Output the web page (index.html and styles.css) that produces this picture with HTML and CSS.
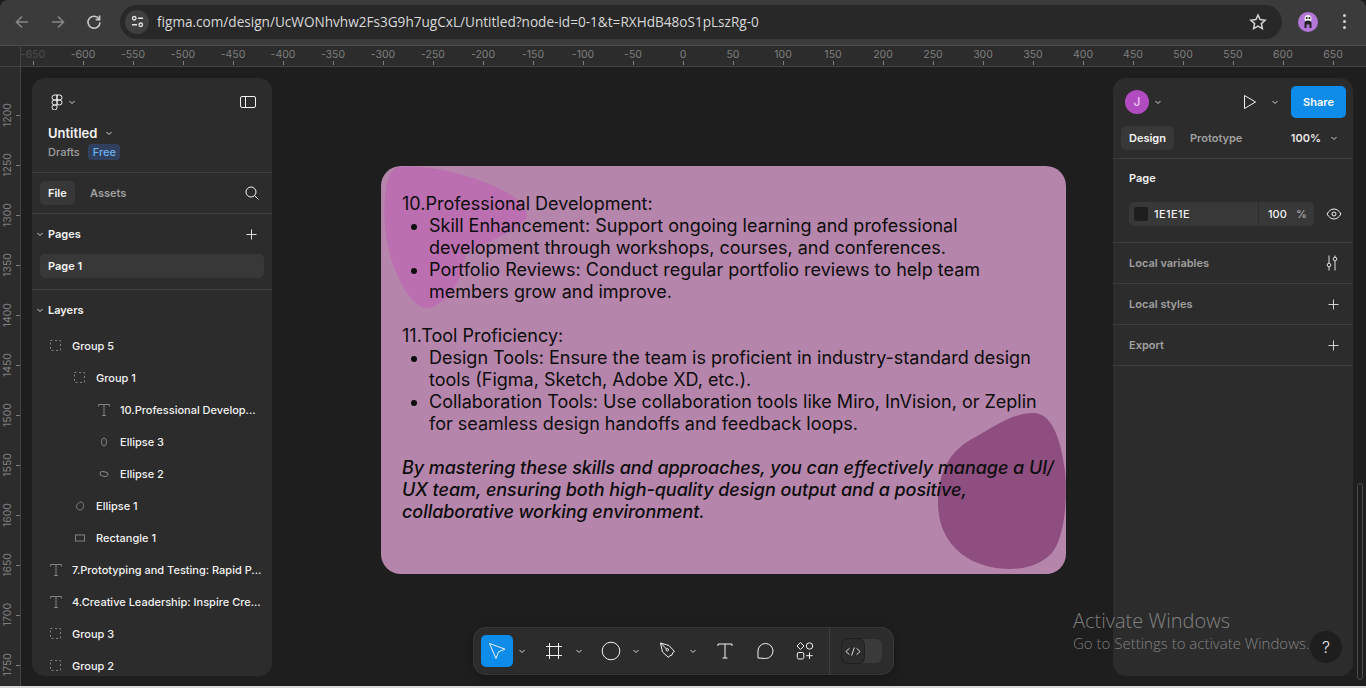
FILE: index.html
```html
<!DOCTYPE html>
<html lang="en">
<head>
    <meta charset="UTF-8" />
    <meta name="viewport" content="width=device-width, initial-scale=1.0" />
    <title>Untitled - Figma</title>
    <link rel="stylesheet" href="styles.css">
</head>
<body>
    <!-- browser toolbar -->
    <header class="chrome">
        <svg class="nav-icon dim" viewBox="0 0 16 16"><path d="M14 8H2.500M8 2.500 2.500 8 8 13.500"/></svg>
        <svg class="nav-icon dim" viewBox="0 0 16 16"><path d="M2 8h11.500M8 2.500 13.500 8 8 13.500"/></svg>
        <svg class="nav-icon" viewBox="0 0 16 16"><path d="M13.200 5.200A6 6 0 1 0 14 8.400"/><path d="M13.600 1.600v4h-4"/></svg>
        <div class="omnibox">
            <span class="site-info">
                <svg viewBox="0 0 14 14"><circle cx="3.500" cy="3.500" r="1.900"/><path d="M7.500 3.500H13M1 10.500h5.500"/><circle cx="10.500" cy="10.500" r="1.900"/></svg>
            </span>
            <span class="url">figma.com/design/UcWONhvhw2Fs3G9h7ugCxL/Untitled?node-id=0-1&amp;t=RXHdB48oS1pLszRg-0</span>
            <svg class="star" viewBox="0 0 18 18"><path d="M9 2l2.100 4.600 5 .6-3.700 3.400 1 5L9 13.100l-4.400 2.500 1-5L1.900 7.200l5-.6z"/></svg>
        </div>
        <span class="profile">
            <svg viewBox="0 0 20 20"><circle cx="10" cy="6.500" r="3.500" fill="#eee"/><circle cx="8.700" cy="6" r="1" fill="#222"/><circle cx="11.500" cy="6" r="1" fill="#222"/><path d="M6.500 16v-4.500a3.500 3 0 0 1 7 0V16h-2v-3.500H8.500V16z" fill="#222"/></svg>
        </span>
        <span class="kebab"><i></i><i></i><i></i></span>
    </header>

    <div class="ruler-top">
        <div class="ruler-corner"></div>
        <div class="ticks-h">
            <span class="faded">-650</span><span>-600</span><span>-550</span><span>-500</span><span>-450</span><span>-400</span><span>-350</span><span>-300</span><span>-250</span><span>-200</span><span>-150</span><span>-100</span><span>-50</span><span>0</span><span>50</span><span>100</span><span>150</span><span>200</span><span>250</span><span>300</span><span>350</span><span>400</span><span>450</span><span>500</span><span>550</span><span>600</span><span>650</span>
        </div>
    </div>

    <div class="workspace">
        <div class="ruler-left">
            <span><b>1200</b></span><span><b>1250</b></span><span><b>1300</b></span><span><b>1350</b></span><span><b>1400</b></span><span><b>1450</b></span><span><b>1500</b></span><span><b>1550</b></span><span><b>1600</b></span><span><b>1650</b></span><span><b>1700</b></span><span><b>1750</b></span>
        </div>

        <main class="canvas">
            <!-- artboard sits on the free canvas -->
            <section class="artboard">
                <svg class="blobs" viewBox="0 0 685 408">
                    <path fill="#bb6fb0" d="M14 2C30-2 60 2 85 10c30 9 61 23 61 40 0 12-46 28-62 38 0 17-12 42-24 48-5 4-10 6-14 6-16 0-32-32-38-57C3 65 2 40 5 24 6 14 9 6 14 2z"/>
                    <path fill="#8e4f80" d="M589 274c21-11 41-27 63-27 20 0 28 28 32 58 3 35-2 70-14 83-10 10-25 15-41 15-39 0-72-23-72-66 0-32 13-52 32-63z"/>
                </svg>
                <div class="copy">
                    <p>10.Professional Development:</p>
                    <ul>
                        <li>Skill Enhancement: Support ongoing learning and professional development through workshops, courses, and conferences.</li>
                        <li>Portfolio Reviews: Conduct regular portfolio reviews to help team members grow and improve.</li>
                    </ul>
                    <p>11.Tool Proficiency:</p>
                    <ul>
                        <li>Design Tools: Ensure the team is proficient in industry-standard design tools (Figma, Sketch, Adobe XD, etc.).</li>
                        <li>Collaboration Tools: Use collaboration tools like Miro, InVision, or Zeplin for seamless design handoffs and feedback loops.</li>
                    </ul>
                    <p class="closing">By mastering these skills and approaches, you can effectively manage a UI/ UX team, ensuring both high-quality design output and a positive, collaborative working environment.</p>
                </div>
            </section>

            <aside class="panel">
                <div class="file-head">
                    <div class="logo-row">
                        <div class="logo-menu">
                            <svg class="figma-logo" viewBox="0 0 12 16"><path d="M6 1H3.500a2.500 2.500 0 0 0 0 5H6zM6 1h2.500a2.500 2.500 0 0 1 0 5H6zM6 6H3.500a2.500 2.500 0 0 0 0 5H6zM6 6h2.500a2.500 2.500 0 0 1 0 5 2.500 2.500 0 0 1-2.500-2.500zM6 11H3.500A2.500 2.500 0 1 0 6 13.500z"/></svg>
                            <svg class="chev" viewBox="0 0 8 8"><path d="M1.500 3 4 5.500 6.500 3"/></svg>
                        </div>
                        <svg class="sidebar-icon" viewBox="0 0 16 12"><rect x=".5" y=".5" width="15" height="11" rx="1.500"/><path d="M5.500 .5v11"/></svg>
                    </div>
                    <div class="file-name">Untitled <svg class="chev" viewBox="0 0 8 8"><path d="M1.500 3 4 5.500 6.500 3"/></svg></div>
                    <div class="file-meta"><span>Drafts</span><span class="badge">Free</span></div>
                </div>

                <div class="tabs">
                    <span class="tab active file-tab">File</span>
                    <span class="tab">Assets</span>
                    <svg class="search-icon" viewBox="0 0 14 14"><circle cx="6" cy="6" r="5"/><path d="M9.600 9.600 13.500 13.500"/></svg>
                </div>

                <div class="pages">
                    <div class="section-title">
                        <svg class="chev" viewBox="0 0 8 8"><path d="M1.500 3 4 5.500 6.500 3"/></svg>
                        <span>Pages</span>
                        <svg class="plus" viewBox="0 0 12 12"><path d="M6 .5v11M.5 6h11"/></svg>
                    </div>
                    <div class="page-row">Page 1</div>
                </div>

                <div class="layers">
                    <div class="section-title">
                        <svg class="chev" viewBox="0 0 8 8"><path d="M1.500 3 4 5.500 6.500 3"/></svg>
                        <span>Layers</span>
                    </div>
                    <ul class="layer-list">
                        <li class="layer"><svg class="layer-icon" viewBox="0 0 12 12"><rect class="dash" x=".5" y=".5" width="10" height="10"/></svg>Group 5</li>
                        <li class="layer depth-1"><svg class="layer-icon" viewBox="0 0 12 12"><rect class="dash" x=".5" y=".5" width="10" height="10"/></svg>Group 1</li>
                        <li class="layer depth-2"><svg class="layer-icon" viewBox="0 0 12 12"><path d="M.5 2.500V.5h11v2M6 .5v11M4 11.500h4"/></svg>10.Professional Develop...</li>
                        <li class="layer depth-2"><svg class="layer-icon" viewBox="0 0 12 12"><ellipse cx="6" cy="6" rx="2.500" ry="4"/></svg>Ellipse 3</li>
                        <li class="layer depth-2"><svg class="layer-icon" viewBox="0 0 12 12"><ellipse cx="6" cy="6" rx="4" ry="2.300" transform="rotate(10 6 6)"/></svg>Ellipse 2</li>
                        <li class="layer depth-1"><svg class="layer-icon" viewBox="0 0 12 12"><path d="M7 2c2 0 2.500 2 2.500 3.800 0 2.500-1.500 4.200-3.500 4.200S2.500 8.500 2.500 6.500C2.500 4.500 5 2 7 2z"/></svg>Ellipse 1</li>
                        <li class="layer depth-1"><svg class="layer-icon" viewBox="0 0 12 12"><rect x="1.500" y="3" width="9" height="6"/></svg>Rectangle 1</li>
                        <li class="layer"><svg class="layer-icon" viewBox="0 0 12 12"><path d="M.5 2.500V.5h11v2M6 .5v11M4 11.500h4"/></svg>7.Prototyping and Testing: Rapid P...</li>
                        <li class="layer"><svg class="layer-icon" viewBox="0 0 12 12"><path d="M.5 2.500V.5h11v2M6 .5v11M4 11.500h4"/></svg>4.Creative Leadership: Inspire Cre...</li>
                        <li class="layer"><svg class="layer-icon" viewBox="0 0 12 12"><rect class="dash" x=".5" y=".5" width="10" height="10"/></svg>Group 3</li>
                        <li class="layer"><svg class="layer-icon" viewBox="0 0 12 12"><rect class="dash" x=".5" y=".5" width="10" height="10"/></svg>Group 2</li>
                    </ul>
                </div>
            </aside>

            <aside class="panel">
                <div class="share-row">
                    <span class="user">J</span>
                    <svg class="chev" viewBox="0 0 8 8"><path d="M1.500 3 4 5.500 6.500 3"/></svg>
                    <svg class="play" viewBox="0 0 14 16"><path d="M1.500 1.500v13l11-6.500z"/></svg>
                    <svg class="chev" viewBox="0 0 8 8"><path d="M1.500 3 4 5.500 6.500 3"/></svg>
                    <button class="share">Share</button>
                </div>
                <div class="design-tabs">
                    <span class="tab active">Design</span>
                    <span class="tab">Prototype</span>
                    <span class="zoom-value">100%</span>
                    <svg class="chev" viewBox="0 0 8 8"><path d="M1.500 3 4 5.500 6.500 3"/></svg>
                </div>
                <div class="page-props">
                    <div class="props-title">Page</div>
                    <div class="fill-row">
                        <div class="fill-field">
                            <div class="fill-color"><i class="swatch"></i>1E1E1E</div>
                            <div class="fill-opacity"><span>100</span><span class="pct">%</span></div>
                        </div>
                        <svg class="eye" viewBox="0 0 16 12"><path d="M1 6c2-3.300 4.300-5 7-5s5 1.700 7 5c-2 3.300-4.300 5-7 5S3 9.300 1 6z"/><circle cx="8" cy="6" r="2"/></svg>
                    </div>
                </div>
                <div class="prop-row">
                    <span>Local variables</span>
                    <svg class="sliders" viewBox="0 0 14 16"><path d="M4 .5v8M4 12v3.500M10 .5V2M10 6v9.500"/><circle cx="4" cy="10" r="1.800"/><circle cx="10" cy="4" r="1.800"/></svg>
                </div>
                <div class="prop-row">
                    <span>Local styles</span>
                    <svg class="plus" viewBox="0 0 12 12"><path d="M6 .5v11M.5 6h11"/></svg>
                </div>
                <div class="prop-row">
                    <span>Export</span>
                    <svg class="plus" viewBox="0 0 12 12"><path d="M6 .5v11M.5 6h11"/></svg>
                </div>
            </aside>

            <!-- floating tools -->
            <nav class="toolbar">
                <span class="tool selected">
                    <svg viewBox="0 0 20 20"><path d="M2.500 2.500 18 8.200l-6.500 2.600L9 17.500z" stroke-linejoin="round"/></svg>
                </span>
                <svg class="chev tool-chev" viewBox="0 0 8 8"><path d="M1.500 3 4 5.500 6.500 3"/></svg>
                <span class="tool">
                    <svg viewBox="0 0 20 20"><path d="M5.500 2v16M14.500 2v16M2 5.500h16M2 14.500h16"/></svg>
                </span>
                <svg class="chev tool-chev" viewBox="0 0 8 8"><path d="M1.500 3 4 5.500 6.500 3"/></svg>
                <span class="tool">
                    <svg viewBox="0 0 20 20"><circle cx="10" cy="10" r="8.800"/></svg>
                </span>
                <svg class="chev tool-chev" viewBox="0 0 8 8"><path d="M1.500 3 4 5.500 6.500 3"/></svg>
                <span class="tool">
                    <svg viewBox="0 0 20 20"><path d="M2.500 2 11 4.500l5.500 6-1.800 1.200-.7 2.300-2.300.7-1.200 1.800-6-5.500zM2.500 2l6 6"/><circle cx="9.300" cy="8.800" r="1.200"/></svg>
                </span>
                <svg class="chev tool-chev" viewBox="0 0 8 8"><path d="M1.500 3 4 5.500 6.500 3"/></svg>
                <span class="tool">
                    <svg viewBox="0 0 20 20"><path d="M3 5V3h14v2M10 3v14M7.500 17h5"/></svg>
                </span>
                <span class="tool spaced">
                    <svg viewBox="0 0 20 20"><path d="M3 17V10a7.500 7.500 0 1 1 7.500 7.500z"/></svg>
                </span>
                <span class="tool spaced">
                    <svg viewBox="0 0 20 20"><path d="M5.500 1.500 9 5 5.500 8.500 2 5z"/><circle cx="14.500" cy="5" r="3.200"/><rect x="2.300" y="11.500" width="6.500" height="6.500" rx="1.500"/><path d="M14.500 11.500v6.500M11.200 14.700h6.500"/></svg>
                </span>
                <div class="dev-toggle">
                    <div class="dev-track">
                        <span class="dev-knob">
                            <svg viewBox="0 0 18 12"><path d="M5 2.500 1 6l4 3.500M13 2.500 17 6l-4 3.500M10.500 1.500l-3 9"/></svg>
                        </span>
                    </div>
                </div>
            </nav>

            <div class="scroll-thumb"></div>
            <div class="activate">
                <div class="activate-title">Activate Windows</div>
                <div class="activate-sub">Go to Settings to activate Windows.</div>
            </div>
            <span class="help">?</span>
        </main>
    </div>
    <div class="taskbar-edge"></div>
</body>
</html>
```

FILE: styles.css
```css
* {
    box-sizing: border-box;
}

body {
    margin: 0;
    width: 1366px;
    height: 688px;
    overflow: hidden;
    display: flex;
    flex-direction: column;
    background-color: #1e1e1e;
    font-family: Inter, "Noto Sans", sans-serif;
    color: #f2f2f2;
}

svg {
    fill: none;
    stroke: currentColor;
    stroke-width: 1;
    flex-shrink: 0;
    display: block;
}

ul {
    margin: 0;
    padding: 0;
}

/* browser toolbar */
.chrome {
    height: 46px;
    flex-shrink: 0;
    display: flex;
    align-items: center;
    padding: 0 12px 2px 14px;
    border-radius: 8px 8px 0 0;
    background-color: #3b3b3b;
    border-bottom: 1px solid #4b4b4b;
}

.nav-icon {
    width: 16px;
    height: 16px;
    margin-right: 20px;
    color: #c7c7c7;
    stroke-width: 1.6;
}

.nav-icon.dim {
    color: #858585;
}

.omnibox {
    width: 1162px;
    height: 34px;
    margin-left: -2px;
    display: flex;
    align-items: center;
    padding: 0 15px 0 5px;
    border-radius: 17px;
    background-color: #282828;
}

.site-info {
    width: 24px;
    height: 24px;
    border-radius: 50%;
    background-color: #3f3f3f;
    display: flex;
    align-items: center;
    justify-content: center;
    color: #e3e3e3;
}

.site-info svg {
    width: 13px;
    height: 13px;
    stroke-width: 1.4;
}

.url {
    flex: 1;
    margin-left: 8px;
    font-family: "Open Sans", sans-serif;
    font-size: 13.6px;
    color: #d8d8d8;
}

.star {
    width: 18px;
    height: 18px;
    color: #d5d5d5;
    stroke-width: 1.5;
}

.profile {
    width: 20px;
    height: 20px;
    margin-left: 16px;
    border-radius: 50%;
    background-color: #b576da;
}

.profile svg {
    stroke: none;
}

.kebab {
    margin-left: 25px;
    display: flex;
    flex-direction: column;
    gap: 3px;
}

.kebab i {
    width: 3px;
    height: 3px;
    border-radius: 50%;
    background-color: #cfcfcf;
}

/* rulers */
.ruler-top {
    height: 21px;
    flex-shrink: 0;
    display: flex;
    background-color: #2c2c2c;
    border-bottom: 1px solid #444;
}

.ruler-corner {
    width: 21px;
    flex-shrink: 0;
    border-right: 1px solid #444;
}

.ticks-h {
    flex: 1;
    display: flex;
    overflow: hidden;
    margin-left: -13px;
}

.ticks-h span {
    width: 50px;
    flex-shrink: 0;
    display: flex;
    flex-direction: column;
    align-items: center;
    padding-top: 2px;
    font-size: 10.5px;
    line-height: 13px;
    color: #7f7f7f;
}

.ticks-h span::after {
    content: "";
    width: 1px;
    height: 4px;
    background-color: #7f7f7f;
}

.ticks-h .faded {
    color: #4e4e4e;
}

.workspace {
    flex: 1;
    min-height: 0;
    display: flex;
}

.ruler-left {
    width: 21px;
    flex-shrink: 0;
    display: flex;
    flex-direction: column;
    overflow: hidden;
    padding-top: 23px;
    background-color: #2c2c2c;
    border-right: 1px solid #444;
}

.ruler-left span {
    height: 50px;
    flex-shrink: 0;
    display: flex;
    align-items: center;
    justify-content: flex-end;
}

.ruler-left span::after {
    content: "";
    width: 4px;
    height: 1px;
    background-color: #7f7f7f;
}

.ruler-left b {
    writing-mode: vertical-rl;
    transform: rotate(180deg);
    margin-right: 2px;
    font-weight: 400;
    font-size: 10.5px;
    line-height: 13px;
    color: #7f7f7f;
}

/* canvas */
.canvas {
    flex: 1;
    position: relative;
    display: flex;
    justify-content: space-between;
    padding: 11px 13px 10px 11px;
    background-color: #1e1e1e;
}

.artboard {
    position: absolute;
    left: 360px;
    top: 99px;
    width: 685px;
    height: 408px;
    border-radius: 20px;
    overflow: hidden;
    background-color: #b585ab;
    color: #0d0d0d;
}

.blobs {
    position: absolute;
    left: 0;
    top: 0;
    width: 685px;
    height: 408px;
    stroke: none;
}

.copy {
    position: relative;
    width: 656px;
    margin-left: 21px;
    padding-top: 27px;
    font-size: 18px;
    line-height: 22px;
}

.copy p {
    margin: 0;
}

.copy ul {
    padding-left: 27px;
    margin-bottom: 22px;
}

.copy .closing {
    font-style: italic;
    font-weight: 500;
    letter-spacing: -0.05px;
}

/* side panels */
.panel {
    width: 240px;
    position: relative;
    overflow: hidden;
    display: flex;
    flex-direction: column;
    border-radius: 13px;
    background-color: #2c2c2c;
    font-size: 11px;
    font-weight: 500;
}

.chev {
    width: 8px;
    height: 8px;
    color: #d5d5d5;
}

.file-head {
    height: 95px;
    flex-shrink: 0;
    padding: 15px 16px 0;
    border-bottom: 1px solid #3f3f3f;
}

.logo-row {
    display: flex;
    align-items: center;
    justify-content: space-between;
    height: 18px;
}

.logo-menu {
    display: flex;
    align-items: center;
    gap: 5px;
    margin-left: 3px;
}

.figma-logo {
    width: 12px;
    height: 16px;
}

.sidebar-icon {
    width: 16px;
    height: 12px;
}

.file-name {
    display: flex;
    align-items: center;
    gap: 8px;
    margin-top: 14px;
    font-size: 13px;
    font-weight: 600;
    line-height: 16px;
}

.file-meta {
    display: flex;
    align-items: center;
    gap: 8px;
    margin-top: 3px;
    color: #a0a0a0;
}

.badge {
    height: 16px;
    padding: 0 4px 0 5px;
    line-height: 16px;
    border-radius: 4px;
    background-color: #2f3f5c;
    color: #6cb2ee;
}

.tabs {
    height: 41px;
    flex-shrink: 0;
    display: flex;
    align-items: center;
    gap: 7px;
    padding: 0 13px 0 8px;
    border-bottom: 1px solid #3f3f3f;
}

.tab {
    height: 24px;
    padding: 0 8px;
    line-height: 24px;
    border-radius: 5px;
    color: #a0a0a0;
    font-weight: 600;
}

.tab.active {
    background-color: #383838;
    color: #f5f5f5;
}

.file-tab {
    min-width: 35px;
}

.search-icon {
    width: 14px;
    height: 14px;
    margin-left: auto;
}

.pages {
    height: 76px;
    flex-shrink: 0;
    border-bottom: 1px solid #3f3f3f;
}

.section-title {
    height: 40px;
    display: flex;
    align-items: center;
    gap: 4px;
    padding: 0 15px 0 4px;
    font-weight: 600;
}

.section-title .plus {
    margin-left: auto;
}

.plus {
    width: 11px;
    height: 11px;
}

.page-row {
    height: 24px;
    margin: 0 8px;
    padding-left: 8px;
    line-height: 24px;
    border-radius: 5px;
    background-color: #383838;
    font-weight: 600;
}

.layers {
    flex: 1;
    min-height: 0;
}

.layer-list {
    list-style: none;
}

.layer {
    height: 32px;
    display: flex;
    align-items: center;
    padding-left: 18px;
    white-space: nowrap;
}

.layer.depth-1 {
    padding-left: 42px;
}

.layer.depth-2 {
    padding-left: 66px;
}

.layer-icon {
    width: 12px;
    height: 12px;
    margin-right: 10px;
    color: #828282;
}

.dash {
    stroke-dasharray: 2 2.5;
}

/* right panel */
.share-row {
    height: 48px;
    flex-shrink: 0;
    display: flex;
    align-items: center;
    padding: 0 7px 0 12px;
}

.user {
    width: 24px;
    height: 24px;
    margin-right: 5px;
    border-radius: 50%;
    background-color: #b04cc0;
    color: #eec6f2;
    font-size: 12px;
    line-height: 24px;
    text-align: center;
}

.play {
    width: 14px;
    height: 16px;
    margin-left: auto;
    margin-right: 14px;
}

.share {
    width: 55px;
    height: 32px;
    margin-left: 12px;
    border: none;
    border-radius: 5px;
    background-color: #0d8ce9;
    color: #fff;
    font-family: inherit;
    font-size: 11px;
    font-weight: 600;
}

.design-tabs {
    height: 33px;
    flex-shrink: 0;
    display: flex;
    align-items: flex-start;
    gap: 8px;
    padding: 0 15px 0 8px;
    border-bottom: 1px solid #3f3f3f;
}

.zoom-value {
    margin-left: auto;
    margin-right: 1px;
    line-height: 24px;
    font-weight: 600;
    color: #e6e6e6;
}

.design-tabs .chev {
    margin-top: 8px;
}

.page-props {
    height: 84px;
    flex-shrink: 0;
    padding: 0 0 0 16px;
    border-bottom: 1px solid #3f3f3f;
}

.props-title {
    height: 43px;
    line-height: 38px;
    font-weight: 600;
}

.fill-row {
    display: flex;
    align-items: center;
}

.fill-field {
    width: 185px;
    height: 24px;
    flex-shrink: 0;
    display: flex;
    border-radius: 5px;
    background-color: #383838;
}

.fill-color {
    width: 130px;
    display: flex;
    align-items: center;
    gap: 6px;
    padding-left: 5px;
    border-right: 1px solid #2c2c2c;
    letter-spacing: 0.4px;
}

.swatch {
    width: 14px;
    height: 14px;
    border-radius: 2px;
    background-color: #1e1e1e;
}

.fill-opacity {
    flex: 1;
    display: flex;
    justify-content: space-between;
    padding: 0 7px 0 9px;
    line-height: 24px;
}

.pct {
    color: #aaa;
}

.eye {
    width: 16px;
    height: 12px;
    margin-left: 12px;
}

.prop-row {
    height: 41px;
    flex-shrink: 0;
    display: flex;
    align-items: center;
    justify-content: space-between;
    padding: 0 14px 0 16px;
    border-bottom: 1px solid #3f3f3f;
    color: #a0a0a0;
    font-weight: 600;
}

.prop-row svg {
    color: #e0e0e0;
}

.sliders {
    width: 14px;
    height: 16px;
}

/* bottom toolbar */
.toolbar {
    position: absolute;
    left: 452px;
    top: 560px;
    width: 421px;
    height: 48px;
    display: flex;
    align-items: center;
    padding-left: 8px;
    border-radius: 13px;
    background-color: #2c2c2c;
    box-shadow: inset 0 0 0 1px #363636, 0 2px 8px rgba(0, 0, 0, 0.3);
}

.tool {
    width: 32px;
    height: 32px;
    display: flex;
    align-items: center;
    justify-content: center;
    border-radius: 5px;
}

.tool svg {
    width: 20px;
    height: 20px;
}

.tool.selected {
    background-color: #0d8ce9;
}

.tool.spaced {
    margin-left: 8px;
}

.tool-chev {
    margin: 0 12px 0 5px;
}

.dev-toggle {
    flex: 1;
    height: 48px;
    margin-left: 8px;
    display: flex;
    align-items: center;
    justify-content: center;
    border-left: 1px solid #3f3f3f;
}

.dev-track {
    width: 40px;
    height: 24px;
    border-radius: 6px;
    background-color: #3a3a3a;
}

.dev-knob {
    width: 22px;
    height: 24px;
    display: flex;
    align-items: center;
    justify-content: center;
    border-radius: 6px;
    background-color: #2c2c2c;
    box-shadow: 0 0 0 1px #1f1f1f;
}

.dev-knob svg {
    width: 16px;
    height: 11px;
}

/* overlays on the right */
.scroll-thumb {
    position: absolute;
    left: 1336px;
    top: 416px;
    width: 6px;
    height: 197px;
    border: 1px solid #4a4a4a;
    border-radius: 3px;
}

.activate {
    position: absolute;
    left: 1052px;
    top: 541px;
    color: rgba(205, 205, 205, 0.55);
    font-family: "Open Sans", sans-serif;
    font-weight: 300;
    white-space: nowrap;
}

.activate-title {
    font-size: 20px;
    line-height: 25px;
}

.activate-sub {
    font-size: 15px;
    line-height: 20px;
}

.help {
    position: absolute;
    left: 1289px;
    top: 564px;
    width: 32px;
    height: 32px;
    border-radius: 50%;
    background-color: #1e1e1e;
    color: #e8e8e8;
    font-size: 16px;
    font-weight: 300;
    line-height: 32px;
    text-align: center;
}

.taskbar-edge {
    height: 2px;
    flex-shrink: 0;
    background-color: #d9d9d9;
}
```
